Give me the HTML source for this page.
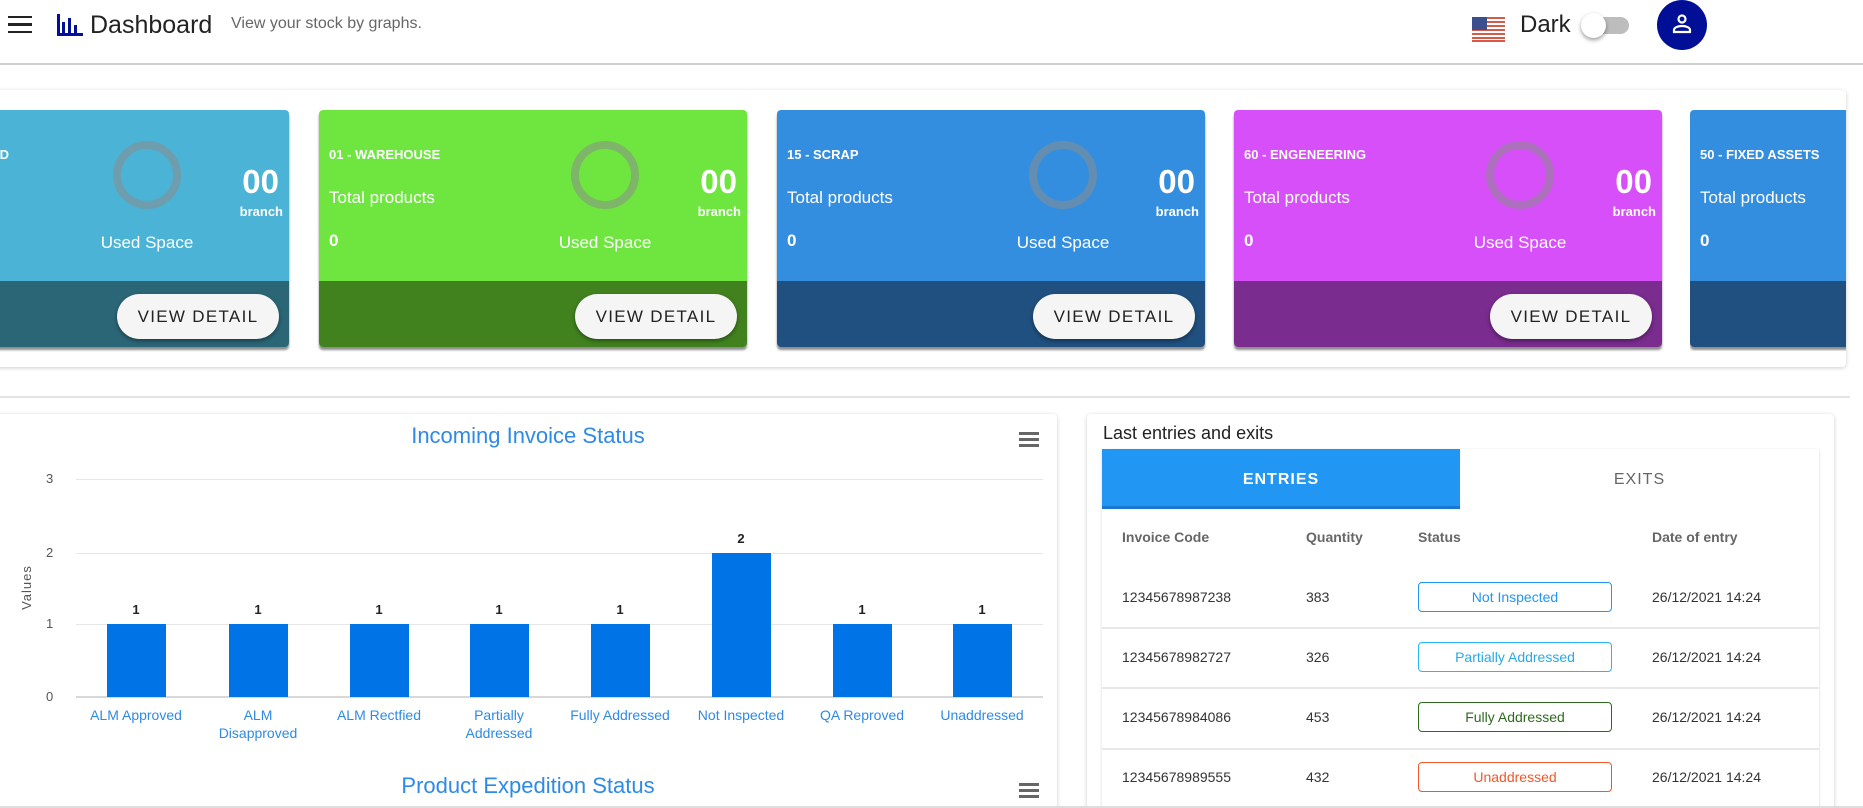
<!DOCTYPE html>
<html><head><meta charset="utf-8"><style>
*{box-sizing:border-box;margin:0;padding:0}
html,body{width:1863px;height:808px;overflow:hidden}
body{background:#fff;font-family:"Liberation Sans",sans-serif;position:relative;color:#222}
#w{position:absolute;left:0;top:0;width:1863px;height:808px;overflow:hidden}
.a{position:absolute}
.card{position:absolute;top:110px;width:428px;height:237px;border-radius:4px;overflow:hidden;box-shadow:0 3px 2px rgba(0,0,0,.45)}
.card .top{position:absolute;left:0;top:0;right:0;height:171px}
.card .bot{position:absolute;left:0;top:171px;right:0;height:66px}
.card .t{position:absolute;left:10px;top:37px;color:#fff;font-weight:bold;font-size:13px}
.card .tp{position:absolute;left:10px;top:78px;color:#fff;font-size:17px}
.card .z{position:absolute;left:10px;top:121px;color:#fff;font-size:17px;font-weight:bold}
.card .ring{position:absolute;left:252px;top:31px;width:68px;height:68px;border-radius:50%;border:8px solid rgba(140,140,140,.55)}
.card .oo{position:absolute;right:10px;top:55px;color:#fff;font-size:33px;font-weight:bold;line-height:1}
.card .br{position:absolute;right:6px;top:94px;color:#fff;font-size:13px;font-weight:bold}
.card .us{position:absolute;left:216px;width:140px;text-align:center;top:123px;color:#fff;font-size:17px}
.card .btn{position:absolute;left:256px;top:184px;width:162px;height:45px;border-radius:23px;background:#f5f5f5;box-shadow:0 2px 4px rgba(0,0,0,.4);font-size:17px;letter-spacing:1.3px;color:#222;text-align:center;line-height:45px}
.bar{position:absolute;width:59px;background:#0074e6}
.bl{position:absolute;width:40px;text-align:center;font-size:13px;font-weight:bold;color:#222}
.xl{position:absolute;width:120px;text-align:center;font-size:14px;color:#2e8ae6;line-height:18px}
.grid{position:absolute;left:76px;width:967px;height:1px;background:#e6e6e6}
.yl{position:absolute;left:46px;font-size:13px;color:#555}
.th{position:absolute;top:529px;font-size:14px;font-weight:bold;color:#666}
.td{position:absolute;font-size:14px;color:#333}
.bd{position:absolute;left:1418px;width:194px;height:30px;border:1px solid;border-radius:4px;text-align:center;line-height:28px;font-size:14px}
.hr{position:absolute;left:1102px;width:717px;height:2px;background:#e8e8e8}
.menu{position:absolute;width:20px;height:15px;border-top:3px solid #666;border-bottom:3px solid #666}
.menu:after{content:"";position:absolute;left:0;right:0;top:3px;height:3px;background:#666}
</style></head><body><div id="w">
<div class="a" style="left:8px;top:16px;width:24px;height:17px;border-top:2.5px solid #222;border-bottom:2.5px solid #222"></div>
<div class="a" style="left:8px;top:23px;width:24px;height:2.5px;background:#222"></div>
<svg class="a" style="left:57px;top:14px" width="26" height="22" viewBox="0 0 26 22"><g fill="#00109a"><rect x="0" y="0" width="3" height="22"/><rect x="5" y="8" width="3" height="14"/><rect x="11" y="4" width="3" height="18"/><rect x="17" y="11" width="3" height="11"/><rect x="0" y="19" width="26" height="3"/></g></svg>
<div class="a" style="left:90px;top:11px;font-size:25px;color:#222">Dashboard</div>
<div class="a" style="left:231px;top:15px;font-size:16px;color:#666">View your stock by graphs.</div>
<svg class="a" style="left:1472px;top:17px" width="33" height="25" viewBox="0 0 33 25"><g fill="#d45a4a"><rect y="0" width="33" height="2"/><rect y="4" width="33" height="2"/><rect y="8" width="33" height="2"/><rect y="12" width="33" height="2"/><rect y="16" width="33" height="2"/><rect y="20" width="33" height="2"/><rect y="23" width="33" height="2"/></g><rect width="15" height="13" fill="#3b4f8c"/></svg>
<div class="a" style="left:1520px;top:11px;font-size:24px;color:#222">Dark</div>
<div class="a" style="left:1588px;top:17px;width:41px;height:17px;border-radius:9px;background:#bdbdbd"></div>
<div class="a" style="left:1581px;top:13px;width:25px;height:25px;border-radius:50%;background:#fff;box-shadow:0 2px 4px rgba(0,0,0,.4)"></div>
<div class="a" style="left:1657px;top:0;width:50px;height:50px;border-radius:50%;background:#000f96"></div>
<svg class="a" style="left:1670px;top:12px" width="24" height="24" viewBox="0 0 24 24"><circle cx="12" cy="7" r="3.5" fill="none" stroke="#fff" stroke-width="2.2"/><path d="M4 20v-2c0-2.5 4-4 8-4s8 1.5 8 4v2z" fill="none" stroke="#fff" stroke-width="2.2"/></svg>
<div class="a" style="left:0;top:63px;width:1863px;height:2px;background:#cfcfcf"></div>

<div class="a" style="left:-10px;top:90px;width:1856px;height:277px;background:#fff;border-radius:4px;box-shadow:0 1px 4px rgba(0,0,0,.2)"></div>
<div class="card" style="left:-139px"><div class="top" style="background:#4ab3d6"></div><div class="bot" style="background:#2b6677"></div><div class="t" style="left:auto;right:280px">BAD</div><div class="ring"></div><div class="oo">00</div><div class="br">branch</div><div class="us">Used Space</div><div class="btn">VIEW DETAIL</div></div>
<div class="card" style="left:319px"><div class="top" style="background:#6ee63f"></div><div class="bot" style="background:#41821f"></div><div class="t">01 - WAREHOUSE</div><div class="tp">Total products</div><div class="z">0</div><div class="ring"></div><div class="oo">00</div><div class="br">branch</div><div class="us">Used Space</div><div class="btn">VIEW DETAIL</div></div>
<div class="card" style="left:777px"><div class="top" style="background:#348ee0"></div><div class="bot" style="background:#1f5080"></div><div class="t">15 - SCRAP</div><div class="tp">Total products</div><div class="z">0</div><div class="ring"></div><div class="oo">00</div><div class="br">branch</div><div class="us">Used Space</div><div class="btn">VIEW DETAIL</div></div>
<div class="card" style="left:1234px"><div class="top" style="background:#d64ff9"></div><div class="bot" style="background:#7a2c8f"></div><div class="t">60 - ENGENEERING</div><div class="tp">Total products</div><div class="z">0</div><div class="ring"></div><div class="oo">00</div><div class="br">branch</div><div class="us">Used Space</div><div class="btn">VIEW DETAIL</div></div>
<div class="a" style="left:1690px;top:110px;width:156px;height:241px;overflow:hidden"><div class="card" style="left:0;top:0"><div class="top" style="background:#348ee0"></div><div class="bot" style="background:#1f5080"></div><div class="t">50 - FIXED ASSETS</div><div class="tp">Total products</div><div class="z">0</div></div></div>
<div class="a" style="left:0;top:396px;width:1850px;height:2px;background:#e3e3e3"></div>

<div class="a" style="left:-5px;top:414px;width:1062px;height:400px;background:#fff;border-radius:4px;box-shadow:0 1px 4px rgba(0,0,0,.2)"></div>
<div class="a" style="left:278px;top:423px;width:500px;text-align:center;font-size:22px;color:#2e8ae6">Incoming Invoice Status</div>
<div class="menu" style="left:1019px;top:432px"></div>
<div class="grid" style="top:479px"></div><div class="grid" style="top:553px"></div><div class="grid" style="top:624px"></div><div class="grid" style="top:696px;height:2px;background:#d8d8d8"></div>
<div class="yl" style="top:471px">3</div><div class="yl" style="top:545px">2</div><div class="yl" style="top:616px">1</div><div class="yl" style="top:689px">0</div>
<div class="a" style="left:4px;top:580px;transform:rotate(-90deg);font-size:13px;color:#555;letter-spacing:1px">Values</div>
<div class="bar" style="left:107px;top:624px;height:73px"></div><div class="bl" style="left:116px;top:602px">1</div>
<div class="bar" style="left:229px;top:624px;height:73px"></div><div class="bl" style="left:238px;top:602px">1</div>
<div class="bar" style="left:350px;top:624px;height:73px"></div><div class="bl" style="left:359px;top:602px">1</div>
<div class="bar" style="left:470px;top:624px;height:73px"></div><div class="bl" style="left:479px;top:602px">1</div>
<div class="bar" style="left:591px;top:624px;height:73px"></div><div class="bl" style="left:600px;top:602px">1</div>
<div class="bar" style="left:712px;top:553px;height:144px"></div><div class="bl" style="left:721px;top:531px">2</div>
<div class="bar" style="left:833px;top:624px;height:73px"></div><div class="bl" style="left:842px;top:602px">1</div>
<div class="bar" style="left:953px;top:624px;height:73px"></div><div class="bl" style="left:962px;top:602px">1</div>
<div class="xl" style="left:76px;top:706px">ALM Approved</div>
<div class="xl" style="left:198px;top:706px">ALM<br>Disapproved</div>
<div class="xl" style="left:319px;top:706px">ALM Rectfied</div>
<div class="xl" style="left:439px;top:706px">Partially<br>Addressed</div>
<div class="xl" style="left:560px;top:706px">Fully Addressed</div>
<div class="xl" style="left:681px;top:706px">Not Inspected</div>
<div class="xl" style="left:802px;top:706px">QA Reproved</div>
<div class="xl" style="left:922px;top:706px">Unaddressed</div>
<div class="a" style="left:278px;top:773px;width:500px;text-align:center;font-size:22px;color:#2e8ae6">Product Expedition Status</div>
<div class="menu" style="left:1019px;top:783px"></div>

<div class="a" style="left:1087px;top:414px;width:747px;height:400px;background:#fff;border-radius:4px;box-shadow:0 1px 4px rgba(0,0,0,.2)"></div>
<div class="a" style="left:1103px;top:423px;font-size:18px;color:#222">Last entries and exits</div>
<div class="a" style="left:1102px;top:449px;width:717px;height:370px;background:#fff;box-shadow:0 1px 3px rgba(0,0,0,.15)"></div>
<div class="a" style="left:1102px;top:449px;width:358px;height:60px;background:#2196f3;border-bottom:3px solid #1976d2;color:#fff;font-size:16px;font-weight:bold;letter-spacing:1px;text-align:center;line-height:62px">ENTRIES</div>
<div class="a" style="left:1460px;top:449px;width:359px;height:60px;color:#666;font-size:16px;letter-spacing:1px;text-align:center;line-height:62px">EXITS</div>
<div class="th" style="left:1122px">Invoice Code</div><div class="th" style="left:1306px">Quantity</div><div class="th" style="left:1418px">Status</div><div class="th" style="left:1652px">Date of entry</div>
<div class="td" style="left:1122px;top:589px">12345678987238</div><div class="td" style="left:1306px;top:589px">383</div><div class="bd" style="top:582px;border-color:#2196f3;color:#2196f3">Not Inspected</div><div class="td" style="left:1652px;top:589px">26/12/2021 14:24</div>
<div class="hr" style="top:627px"></div>
<div class="td" style="left:1122px;top:649px">12345678982727</div><div class="td" style="left:1306px;top:649px">326</div><div class="bd" style="top:642px;border-color:#29b6f6;color:#29a8e8">Partially Addressed</div><div class="td" style="left:1652px;top:649px">26/12/2021 14:24</div>
<div class="hr" style="top:687px"></div>
<div class="td" style="left:1122px;top:709px">12345678984086</div><div class="td" style="left:1306px;top:709px">453</div><div class="bd" style="top:702px;border-color:#2e6b1e;color:#2e6b1e">Fully Addressed</div><div class="td" style="left:1652px;top:709px">26/12/2021 14:24</div>
<div class="hr" style="top:748px"></div>
<div class="td" style="left:1122px;top:769px">12345678989555</div><div class="td" style="left:1306px;top:769px">432</div><div class="bd" style="top:762px;border-color:#f0582a;color:#f0582a">Unaddressed</div><div class="td" style="left:1652px;top:769px">26/12/2021 14:24</div>
<div class="a" style="left:0;top:806px;width:1863px;height:2px;background:#ddd"></div>
</div></body></html>
